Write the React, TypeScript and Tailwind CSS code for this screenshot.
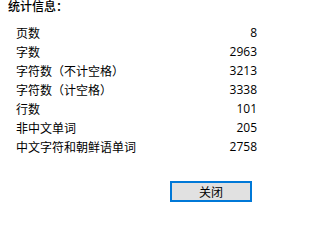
const stats: Array<[string, string]> = [
  ['页数', '8'],
  ['字数', '2963'],
  ['字符数（不计空格）', '3213'],
  ['字符数（计空格）', '3338'],
  ['行数', '101'],
  ['非中文单词', '205'],
  ['中文字符和朝鲜语单词', '2758'],
];

export default function App() {
  return (
    <div
      className="w-[279px] h-[219px] bg-white text-black text-[12px] overflow-hidden"
      style={{ fontFamily: '"Noto Sans CJK SC", "Noto Sans", sans-serif' }}
    >
      <div className="pl-[8px] leading-[14px] -mt-[1px] font-medium">统计信息：</div>
      <div className="mt-[10px] pl-[16px] pr-[22px]">
        {stats.map(([label, value]) => (
          <div key={label} className="flex items-center justify-between h-[19px]">
            <span>{label}</span>
            <span style={{ fontFamily: '"Open Sans", "Noto Sans", sans-serif' }}>{value}</span>
          </div>
        ))}
      </div>
      <div className="mt-[25px] pl-[170px]">
        <button className="w-[82px] h-[21px] border-2 border-[#0078d7] bg-[#e1e1e1] flex items-center justify-center leading-none">
          关闭
        </button>
      </div>
    </div>
  );
}
